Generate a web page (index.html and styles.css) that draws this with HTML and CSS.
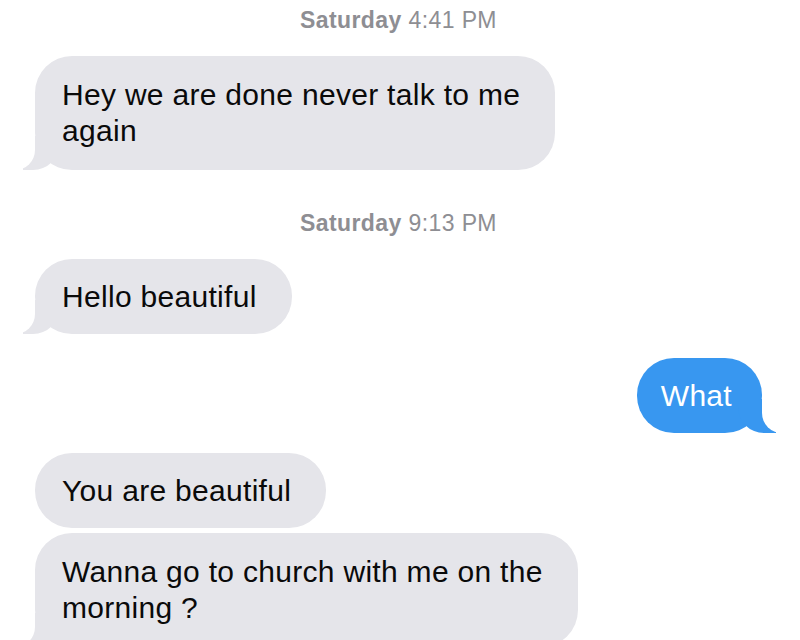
FILE: index.html
```html
<!DOCTYPE html>
<html lang="en">
<head>
<meta charset="utf-8">
<title>Messages</title>
<link rel="stylesheet" href="styles.css">
</head>
<body>
<main class="thread">
  <div class="stamp stamp-first"><span class="day">Saturday</span> 4:41 PM</div>
  <div class="bubble them tail multi gap-a">Hey we are done never talk to me<br>again</div>
  <div class="stamp stamp-second"><span class="day">Saturday</span> 9:13 PM</div>
  <div class="bubble them tail gap-a">Hello beautiful</div>
  <div class="bubble me tail gap-b">What</div>
  <div class="bubble them gap-c">You are beautiful</div>
  <div class="bubble them tail multi gap-d">Wanna go to church with me on the<br>morning ?</div>
</main>
</body>
</html>
```
FILE: styles.css
```css
html, body {
  margin: 0;
  padding: 0;
  background: #ffffff;
}

body {
  width: 800px;
  height: 640px;
  overflow: hidden;
  font-family: "Liberation Sans", Arial, sans-serif;
}

.thread {
  display: flex;
  flex-direction: column;
  align-items: flex-start;
  padding: 5px 38px 0 35px;
}

.stamp {
  align-self: center;
  font-size: 23px;
  line-height: 30px;
  letter-spacing: 0.4px;
  color: #8e8e93;
}

.stamp .day {
  font-weight: 700;
}

.stamp-second {
  margin-top: 38px;
}

.bubble {
  position: relative;
  font-size: 30px;
  line-height: 36px;
  letter-spacing: 0.3px;
  color: #0a0a0a;
  border-radius: 37px;
  white-space: nowrap;
}

.them {
  background: #e5e5ea;
  padding: 20px 35px 19px 27px;
}

.them.multi {
  padding-top: 21px;
  padding-bottom: 21px;
}

.me {
  align-self: flex-end;
  background: #3897f0;
  color: #ffffff;
  padding: 20px 30px 19px 24px;
}

.gap-a { margin-top: 21px; }
.gap-b { margin-top: 24px; }
.gap-c { margin-top: 20px; }
.gap-d { margin-top: 5px; }

.them.tail::before {
  content: "";
  position: absolute;
  bottom: 0;
  left: -12px;
  width: 36px;
  height: 34px;
  background: #e5e5ea;
  border-bottom-right-radius: 26px;
}

.them.tail::after {
  content: "";
  position: absolute;
  bottom: 0;
  left: -24px;
  width: 24px;
  height: 36px;
  background: #ffffff;
  border-bottom-right-radius: 20px;
}

.me.tail::before {
  content: "";
  position: absolute;
  bottom: 0;
  right: -14px;
  width: 38px;
  height: 34px;
  background: #3897f0;
  border-bottom-left-radius: 26px;
}

.me.tail::after {
  content: "";
  position: absolute;
  bottom: 0;
  right: -26px;
  width: 26px;
  height: 36px;
  background: #ffffff;
  border-bottom-left-radius: 20px;
}
```
